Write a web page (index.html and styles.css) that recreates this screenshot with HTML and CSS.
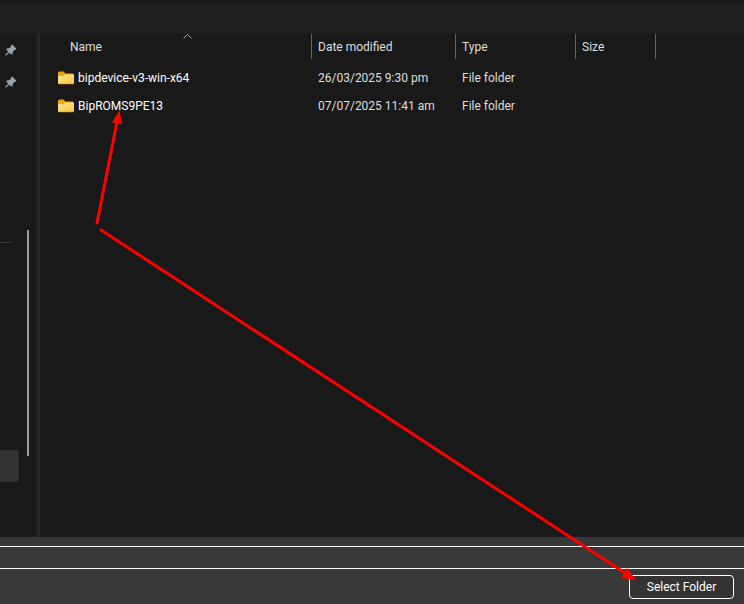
FILE: index.html
```
<!DOCTYPE html>
<html lang="en">

<head>
   <meta charset="UTF-8" />
   <meta name="viewport" content="width=device-width, initial-scale=1.0" />
   <title>Select Folder</title>
   <link rel="stylesheet" href="styles.css">
</head>

<body>
   <svg class="defs" aria-hidden="true">
      <symbol id="pin" viewBox="0 0 12 12">
         <path d="M7 0.5 L11.3 4.6 L10.3 6 L9 6.3 L7.7 8.2 L7.5 10.3 L6.3 10.6 L4.2 8.7 L1.2 11.5 L0.4 11.4 L0.5 10.6 L3.3 7.7 L1.3 5.6 L1.8 4.5 L4 4.2 L5.8 3 L6 1.5 Z" fill="#9aa4ab" />
      </symbol>
      <symbol id="folder" viewBox="0 0 16 14">
         <path d="M0 2 Q0 0.5 1.5 0.5 H5.5 L7.5 2.5 H14.5 Q16 2.5 16 4 V8 H0 Z" fill="#f2a60d" />
         <path d="M0 5 H5.5 L7.5 3.5 H15 Q16 3.5 16 4.5 V12 Q16 13 15 13 H1 Q0 13 0 12 Z" fill="url(#folder-front)" />
         <path d="M0 12 Q0 13.3 1.3 13.3 H14.7 Q16 13.3 16 12 Q15.5 12.5 14.7 12.5 H1.3 Q0.5 12.5 0 12 Z" fill="#e8a820" />
      </symbol>
      <linearGradient id="folder-front" x1="0" y1="0" x2="1" y2="1">
         <stop offset="0" stop-color="#ffe59a" />
         <stop offset="1" stop-color="#fbc53a" />
      </linearGradient>
   </svg>

   <header class="toolbar"></header>

   <main class="browser">
      <nav class="sidebar">
         <ul class="places">
            <li class="place"><svg class="pin"><use href="#pin" /></svg></li>
            <li class="place"><svg class="pin"><use href="#pin" /></svg></li>
            <li class="divider"></li>
            <li class="place selected"></li>
         </ul>
         <div class="scrollbar">
            <div class="thumb"></div>
         </div>
      </nav>

      <section class="files">
         <table>
            <colgroup>
               <col class="col-name">
               <col class="col-date">
               <col class="col-type">
               <col class="col-size">
               <col>
            </colgroup>
            <thead>
               <tr>
                  <th>
                     <div class="heading">Name</div>
                     <svg class="sort" viewBox="0 0 9 5"><path d="M0.5 4.5 L4.5 0.5 L8.5 4.5" fill="none" stroke="#a8a8a8" /></svg>
                  </th>
                  <th><div class="heading">Date modified</div></th>
                  <th><div class="heading">Type</div></th>
                  <th><div class="heading">Size</div></th>
                  <th><div class="heading"></div></th>
               </tr>
            </thead>
            <tbody>
               <tr>
                  <td><div class="name"><svg class="folder"><use href="#folder" /></svg>bipdevice-v3-win-x64</div></td>
                  <td>26/03/2025 9:30 pm</td>
                  <td>File folder</td>
                  <td></td>
                  <td></td>
               </tr>
               <tr>
                  <td><div class="name"><svg class="folder"><use href="#folder" /></svg>BipROMS9PE13</div></td>
                  <td>07/07/2025 11:41 am</td>
                  <td>File folder</td>
                  <td></td>
                  <td></td>
               </tr>
            </tbody>
         </table>
      </section>
   </main>

   <footer class="actions">
      <input type="text" class="folder-input" aria-label="Folder">
      <button type="button" class="select-button">Select Folder</button>
   </footer>

   <svg class="arrows" viewBox="0 0 744 604" aria-hidden="true">
      <g stroke="#f00" stroke-width="3" stroke-linecap="round">
         <line x1="97" y1="223" x2="117" y2="122" />
         <line x1="101" y1="230" x2="625" y2="573" />
      </g>
      <g fill="#f00">
         <path d="M119.500 110 L122 124.500 L112 122.500 Z" />
         <path d="M636 580 L621 578 L627 568 Z" />
      </g>
   </svg>
</body>

</html>
```

FILE: styles.css
```
:root {
   color-scheme: dark;
   --bg: #191919;
   --bar: #202020;
   --panel: #383838;
   --line: #636363;
}

*,
*::before,
*::after {
   margin: 0;
   padding: 0;
   box-sizing: border-box;
}

body {
   position: relative;
   display: flex;
   flex-direction: column;
   height: 100vh;
   overflow: hidden;
   background: var(--bg);
   color: #dedede;
   font-family: Roboto, "Open Sans", sans-serif;
   font-size: 12px;
   line-height: 16px;
}

.defs {
   position: absolute;
   width: 0;
   height: 0;
}

.toolbar {
   height: 33px;
   border-top: 3px solid var(--bg);
   background: var(--bar);
}

.browser {
   flex: 1;
   display: flex;
   min-height: 0;
}

/* left pane */
.sidebar {
   display: flex;
   width: 40px;
   border-right: 3px solid #262626;
}

.places {
   width: 19px;
   padding-top: 1px;
   list-style: none;
}

.place {
   display: flex;
   align-items: center;
   height: 32px;
   padding-left: 5px;
}

.pin {
   width: 12px;
   height: 12px;
}

.divider {
   width: 11px;
   height: 1px;
   margin: 144px 0 207px;
   background: #3d3d3d;
}

.selected {
   background: #333;
   border: 1px solid #2b2b2b;
   border-left: none;
   border-radius: 0 2px 2px 0;
}

.scrollbar {
   flex: 1;
   padding-left: 8px;
}

.thumb {
   position: relative;
   top: 39%;
   width: 2px;
   height: 45%;
   background: #9a9a9a;
}

/* file list */
.files {
   flex: 1;
}

table {
   width: 100%;
   table-layout: fixed;
   border-collapse: collapse;
}

.col-name {
   width: 271px;
}

.col-date {
   width: 144px;
}

.col-type {
   width: 120px;
}

.col-size {
   width: 80px;
}

th {
   position: relative;
   height: 31px;
   padding-top: 1px;
   font-weight: 400;
   text-align: left;
   vertical-align: top;
}

.heading {
   height: 25px;
   padding: 5px 6px;
   border-left: 1px solid var(--line);
}

th:first-child .heading {
   padding-left: 30px;
   border-left: none;
}

.sort {
   position: absolute;
   top: 1px;
   left: 143px;
   width: 9px;
   height: 5px;
}

td {
   height: 28px;
   padding-left: 7px;
}

td:first-child {
   padding-left: 18px;
}

.name {
   display: flex;
   align-items: center;
   gap: 4px;
   color: #fff;
}

.folder {
   width: 16px;
   height: 14px;
}

/* bottom bar */
.actions {
   display: flex;
   flex-direction: column;
   padding: 9px 0 5px;
   background: var(--panel);
}

.folder-input {
   width: 100%;
   height: 23px;
   padding: 0 8px;
   border: solid #fff;
   border-width: 1px 0;
   background: var(--panel);
   color: #fff;
   font: inherit;
   outline: none;
}

.select-button {
   align-self: flex-end;
   width: 105px;
   height: 24px;
   margin: 6px 10px 0 0;
   border: 1px solid #fff;
   border-radius: 4px;
   background: #333;
   color: #fff;
   font: inherit;
}

.arrows {
   position: absolute;
   top: 0;
   left: 0;
   width: 744px;
   height: 604px;
   pointer-events: none;
}
```
